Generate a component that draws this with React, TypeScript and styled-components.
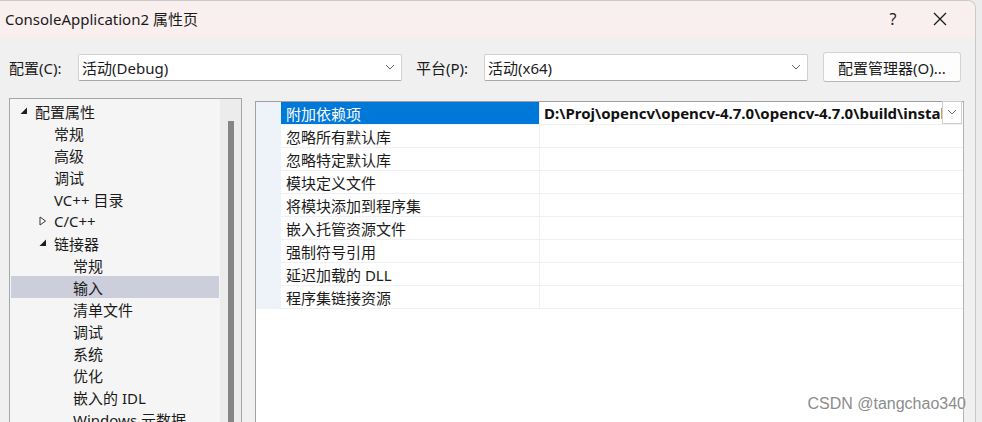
import React from "react";
import styled, { createGlobalStyle } from "styled-components";

const GlobalStyle = createGlobalStyle`
  html, body {
    margin: 0;
    padding: 0;
    background: #ececec;
  }
  body {
    font-family: "Segoe UI", "Noto Sans", "Noto Sans CJK SC", sans-serif;
    color: #1b1b1b;
  }
`;

const Page = styled.div`
  width: 982px;
  height: 422px;
  overflow: hidden;
  position: relative;
  background: #ececec;
`;

const Window = styled.div`
  width: 976px;
  height: 440px;
  background: #f0f0f0;
  border-top-right-radius: 8px;
  border-top: 1px solid #c9c9c9;
  border-right: 1px solid #c9c9c9;
  box-sizing: border-box;
  display: flex;
  flex-direction: column;
  overflow: hidden;
`;

const TitleBar = styled.div`
  height: 36px;
  background: #f9efef;
  display: flex;
  align-items: center;
  padding-left: 5px;
  font-size: 15px;
  color: #1a1a1a;
`;

const Title = styled.span`
  flex: 1;
  margin-top: -2px;
`;

const TitleButton = styled.div<{ $w: number }>`
  width: ${(p) => p.$w}px;
  height: 36px;
  display: flex;
  align-items: center;
  justify-content: center;
  font-size: 16px;
  color: #222;
`;

const Toolbar = styled.div`
  display: flex;
  align-items: center;
  padding: 15px 0 0 9px;
  height: 30px;
`;

const Label = styled.span<{ $w: number }>`
  width: ${(p) => p.$w}px;
  font-size: 15px;
`;

const Combo = styled.div<{ $w: number }>`
  width: ${(p) => p.$w}px;
  height: 27px;
  box-sizing: border-box;
  background: #fff;
  border: 1px solid #d0d0d0;
  border-bottom-color: #a8a8a8;
  border-radius: 2px;
  display: flex;
  align-items: center;
  padding: 0 6px 0 3px;
  font-size: 15px;
  margin-right: 14px;
`;

const ComboText = styled.span`
  flex: 1;
`;

const Button = styled.div`
  width: 138px;
  height: 30px;
  box-sizing: border-box;
  background: #fdfdfd;
  border: 1px solid #d3d3d3;
  border-bottom-color: #b8b8b8;
  border-radius: 3px;
  display: flex;
  align-items: center;
  justify-content: center;
  font-size: 15px;
  margin-left: 1px;
`;

const Main = styled.div`
  display: flex;
  align-items: flex-start;
  padding: 16px 0 0 9px;
  gap: 13px;
  flex: 1;
`;

const TreePanel = styled.div`
  width: 233px;
  height: 340px;
  flex-shrink: 0;
  box-sizing: border-box;
  border: 1px solid #a5a5ad;
  background: #f5f5f5;
  display: flex;
`;

const TreeList = styled.div`
  flex: 1;
  padding: 1px 1px 0 1px;
`;

const TreeRow = styled.div<{ $level: number; $selected?: boolean }>`
  height: 22px;
  display: flex;
  align-items: center;
  padding-left: ${(p) => 24 + p.$level * 19}px;
  position: relative;
  font-size: 15px;
  white-space: nowrap;
  background: ${(p) => (p.$selected ? "#cccedb" : "transparent")};
`;

const Twisty = styled.span`
  position: absolute;
  margin-left: -16px;
  width: 10px;
  height: 10px;
  display: flex;
  align-items: center;
  justify-content: center;
`;

const ScrollTrack = styled.div`
  width: 21px;
  background: #ececec;
  display: flex;
  justify-content: center;
  padding-top: 22px;
`;

const ScrollThumb = styled.div`
  width: 6px;
  height: 320px;
  background: #858585;
`;

const GridPanel = styled.div`
  margin-top: 3px;
  width: 709px;
  height: 340px;
  flex-shrink: 0;
  box-sizing: border-box;
  border: 1px solid #a0a0a0;
  border-right-color: #b4b4b4;
  background: #fff;
`;

const GridBody = styled.div`
  display: flex;
`;

const Gutter = styled.div`
  width: 25px;
  flex-shrink: 0;
  background: #eef2f9;
`;

const Rows = styled.div`
  flex: 1;
  min-width: 0;
`;

const Row = styled.div`
  display: flex;
  height: 23px;
  box-sizing: border-box;
  border-bottom: 1px solid #eef0f5;
`;

const NameCell = styled.div<{ $selected?: boolean }>`
  width: 259px;
  flex-shrink: 0;
  box-sizing: border-box;
  border-right: 1px solid #eef0f5;
  padding-left: 5px;
  display: flex;
  align-items: center;
  font-size: 15px;
  background: ${(p) => (p.$selected ? "#0078d7" : "#fff")};
  color: ${(p) => (p.$selected ? "#fff" : "#1b1b1b")};
`;

const ValueCell = styled.div`
  flex: 1;
  min-width: 0;
  display: flex;
  align-items: center;
  padding-left: 4px;
  padding-right: 1px;
`;

const ValueText = styled.span`
  font-weight: 700;
  font-size: 15px;
  white-space: nowrap;
  overflow: hidden;
  flex: 1;
  min-width: 0;
  color: #111;
`;

const CellDrop = styled.div`
  width: 20px;
  height: 23px;
  margin-top: -2px;
  box-sizing: border-box;
  background: #fff;
  border: 1px solid #cfcfcf;
  display: flex;
  align-items: center;
  justify-content: center;
  flex-shrink: 0;
`;

const Watermark = styled.div`
  position: absolute;
  right: 16px;
  bottom: 9px;
  font-family: "Liberation Sans", Arial, sans-serif;
  font-size: 16px;
  color: #8c8c8c;
  text-shadow: 0 0 1px #fff;
`;

const Chevron = () => (
  <svg width="10" height="6" viewBox="0 0 10 6">
    <path d="M1 1 L5 5 L9 1" fill="none" stroke="#666" strokeWidth="1" />
  </svg>
);

const CloseIcon = () => (
  <svg width="14" height="14" viewBox="0 0 14 14">
    <path d="M1 1 L13 13 M13 1 L1 13" stroke="#1a1a1a" strokeWidth="1.3" />
  </svg>
);

const Expanded = () => (
  <svg width="8" height="8" viewBox="0 0 8 8">
    <path d="M7 0.5 L7 7 L0.5 7 Z" fill="#1e1e1e" />
  </svg>
);

const Collapsed = () => (
  <svg width="8" height="10" viewBox="0 0 8 10">
    <path d="M1 1 L6.5 5 L1 9 Z" fill="#fff" stroke="#333" strokeWidth="1" />
  </svg>
);

type TreeItem = { label: string; level: number; twisty?: "open" | "closed"; selected?: boolean };

const treeItems: TreeItem[] = [
  { label: "配置属性", level: 0, twisty: "open" },
  { label: "常规", level: 1 },
  { label: "高级", level: 1 },
  { label: "调试", level: 1 },
  { label: "VC++ 目录", level: 1 },
  { label: "C/C++", level: 1, twisty: "closed" },
  { label: "链接器", level: 1, twisty: "open" },
  { label: "常规", level: 2 },
  { label: "输入", level: 2, selected: true },
  { label: "清单文件", level: 2 },
  { label: "调试", level: 2 },
  { label: "系统", level: 2 },
  { label: "优化", level: 2 },
  { label: "嵌入的 IDL", level: 2 },
  { label: "Windows 元数据", level: 2 },
  { label: "高级", level: 2 },
];

const props = [
  "附加依赖项",
  "忽略所有默认库",
  "忽略特定默认库",
  "模块定义文件",
  "将模块添加到程序集",
  "嵌入托管资源文件",
  "强制符号引用",
  "延迟加载的 DLL",
  "程序集链接资源",
];

export default function App() {
  return (
    <Page>
      <GlobalStyle />
      <Window>
        <TitleBar>
          <Title>ConsoleApplication2 属性页</Title>
          <TitleButton $w={24}>?</TitleButton>
          <TitleButton $w={70}>
            <CloseIcon />
          </TitleButton>
        </TitleBar>

        <Toolbar>
          <Label $w={69}>配置(C):</Label>
          <Combo $w={324}>
            <ComboText>活动(Debug)</ComboText>
            <Chevron />
          </Combo>
          <Label $w={68}>平台(P):</Label>
          <Combo $w={324}>
            <ComboText>活动(x64)</ComboText>
            <Chevron />
          </Combo>
          <Button>配置管理器(O)...</Button>
        </Toolbar>

        <Main>
          <TreePanel>
            <TreeList>
              {treeItems.map((item, i) => (
                <TreeRow key={i} $level={item.level} $selected={item.selected}>
                  {item.twisty && (
                    <Twisty>{item.twisty === "open" ? <Expanded /> : <Collapsed />}</Twisty>
                  )}
                  {item.label}
                </TreeRow>
              ))}
            </TreeList>
            <ScrollTrack>
              <ScrollThumb />
            </ScrollTrack>
          </TreePanel>

          <GridPanel>
            <GridBody>
              <Gutter />
              <Rows>
                {props.map((name, i) => (
                  <Row key={name}>
                    <NameCell $selected={i === 0}>{name}</NameCell>
                    <ValueCell>
                      {i === 0 && (
                        <>
                          <ValueText>
                            D:\Proj\opencv\opencv-4.7.0\opencv-4.7.0\build\install\x64\vc16\lib\opencv_world470d.lib
                          </ValueText>
                          <CellDrop>
                            <Chevron />
                          </CellDrop>
                        </>
                      )}
                    </ValueCell>
                  </Row>
                ))}
              </Rows>
            </GridBody>
          </GridPanel>
        </Main>
      </Window>
      <Watermark>CSDN @tangchao340</Watermark>
    </Page>
  );
}
